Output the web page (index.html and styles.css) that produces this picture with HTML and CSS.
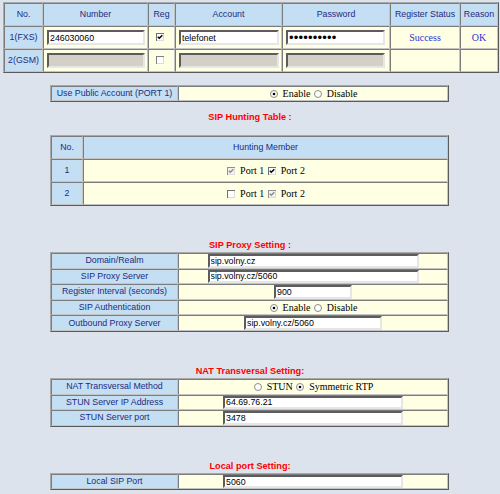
FILE: index.html
```html
<!DOCTYPE html>
<html>
<head>
<meta charset="utf-8">
<title>SIP Settings</title>
<link rel="stylesheet" href="styles.css">
</head>
<body>
<div class="page">

<table class="grid ports">
  <colgroup><col class="p1"><col class="p2"><col class="p3"><col class="p4"><col class="p5"><col class="p6"><col class="p7"></colgroup>
  <tr>
    <th>No.</th><th>Number</th><th>Reg</th><th>Account</th><th>Password</th><th>Register Status</th><th>Reason</th>
  </tr>
  <tr>
    <th>1(FXS)</th>
    <td class="fld"><input class="in w-num" type="text" value="246030060"></td>
    <td><svg class="cb" width="8" height="8" viewBox="0 0 8 8"><rect width="8" height="8" fill="#dcdcdc"/><path d="M0 0H8V1H1V8H0Z" fill="#707070"/><rect x="1" y="1" width="6" height="6" fill="#fff"/><path d="M1.8 3.7L3.3 5.2L6.3 2.2" fill="none" stroke="#000" stroke-width="1.5"/></svg></td>
    <td class="fld"><input class="in w-acc" type="text" value="telefonet"></td>
    <td class="fld"><input class="in w-pw pw" type="password" value="1234567890"></td>
    <td class="st">Success</td>
    <td class="st">OK</td>
  </tr>
  <tr>
    <th>2(GSM)</th>
    <td class="fld"><input class="in w-num" type="text" disabled></td>
    <td><svg class="cb" width="8" height="8" viewBox="0 0 8 8"><rect width="8" height="8" fill="#dcdcdc"/><path d="M0 0H8V1H1V8H0Z" fill="#808080"/><rect x="1" y="1" width="6" height="6" fill="#fff"/></svg></td>
    <td class="fld"><input class="in w-acc" type="text" disabled></td>
    <td class="fld"><input class="in w-pw" type="password" disabled></td>
    <td></td>
    <td></td>
  </tr>
</table>

<table class="grid form public">
  <colgroup><col class="lc"><col class="vc"></colgroup>
  <tr>
    <th>Use Public Account (PORT 1)</th>
    <td class="opts"><svg class="rd" width="8" height="8" viewBox="0 0 8 8"><circle cx="4" cy="4" r="3.5" fill="#fff" stroke="#8a8a8a"/><circle cx="4" cy="4" r="1.3" fill="#000"/></svg><span class="sv">Enable</span> <svg class="rd" width="8" height="8" viewBox="0 0 8 8"><circle cx="4" cy="4" r="3.5" fill="#fff" stroke="#8a8a8a"/></svg><span class="sv">Disable</span></td>
  </tr>
</table>

<div class="title first">SIP Hunting Table :</div>
<table class="grid hunt">
  <colgroup><col class="hc1"><col class="hc2"></colgroup>
  <tr><th>No.</th><th>Hunting Member</th></tr>
  <tr>
    <th>1</th>
    <td class="opts"><svg class="cb" width="8" height="8" viewBox="0 0 8 8"><rect width="8" height="8" fill="#dcdcdc"/><path d="M0 0H8V1H1V8H0Z" fill="#909090"/><rect x="1" y="1" width="6" height="6" fill="#f2f2f2"/><path d="M1.8 3.7L3.3 5.2L6.3 2.2" fill="none" stroke="#8c8c8c" stroke-width="1.5"/></svg><span class="sv">Port 1</span> <svg class="cb" width="8" height="8" viewBox="0 0 8 8"><rect width="8" height="8" fill="#dcdcdc"/><path d="M0 0H8V1H1V8H0Z" fill="#707070"/><rect x="1" y="1" width="6" height="6" fill="#fff"/><path d="M1.8 3.7L3.3 5.2L6.3 2.2" fill="none" stroke="#000" stroke-width="1.5"/></svg><span class="sv">Port 2</span></td>
  </tr>
  <tr>
    <th>2</th>
    <td class="opts"><svg class="cb" width="8" height="8" viewBox="0 0 8 8"><rect width="8" height="8" fill="#dcdcdc"/><path d="M0 0H8V1H1V8H0Z" fill="#707070"/><rect x="1" y="1" width="6" height="6" fill="#fff"/></svg><span class="sv">Port 1</span> <svg class="cb" width="8" height="8" viewBox="0 0 8 8"><rect width="8" height="8" fill="#dcdcdc"/><path d="M0 0H8V1H1V8H0Z" fill="#909090"/><rect x="1" y="1" width="6" height="6" fill="#f2f2f2"/><path d="M1.8 3.7L3.3 5.2L6.3 2.2" fill="none" stroke="#8c8c8c" stroke-width="1.5"/></svg><span class="sv">Port 2</span></td>
  </tr>
</table>

<div class="title">SIP Proxy Setting :</div>
<table class="grid form proxy">
  <colgroup><col class="lc"><col class="vc"></colgroup>
  <tr><th>Domain/Realm</th><td><input class="in w-211" type="text" value="sip.volny.cz"></td></tr>
  <tr><th>SIP Proxy Server</th><td><input class="in w-211" type="text" value="sip.volny.cz/5060"></td></tr>
  <tr><th>Register Interval (seconds)</th><td><input class="in w-78" type="text" value="900"></td></tr>
  <tr><th>SIP Authentication</th><td class="opts"><svg class="rd" width="8" height="8" viewBox="0 0 8 8"><circle cx="4" cy="4" r="3.5" fill="#fff" stroke="#8a8a8a"/><circle cx="4" cy="4" r="1.3" fill="#000"/></svg><span class="sv">Enable</span> <svg class="rd" width="8" height="8" viewBox="0 0 8 8"><circle cx="4" cy="4" r="3.5" fill="#fff" stroke="#8a8a8a"/></svg><span class="sv">Disable</span></td></tr>
  <tr><th>Outbound Proxy Server</th><td><input class="in w-138" type="text" value="sip.volny.cz/5060"></td></tr>
</table>

<div class="title">NAT Transversal Setting:</div>
<table class="grid form nat">
  <colgroup><col class="lc"><col class="vc"></colgroup>
  <tr><th>NAT Transversal Method</th><td class="opts"><svg class="rd" width="8" height="8" viewBox="0 0 8 8"><circle cx="4" cy="4" r="3.5" fill="#fff" stroke="#8a8a8a"/></svg><span class="sv">STUN</span> <svg class="rd" width="8" height="8" viewBox="0 0 8 8"><circle cx="4" cy="4" r="3.5" fill="#fff" stroke="#8a8a8a"/><circle cx="4" cy="4" r="1.3" fill="#000"/></svg><span class="sv">Symmetric RTP</span></td></tr>
  <tr><th>STUN Server IP Address</th><td><input class="in w-180" type="text" value="64.69.76.21"></td></tr>
  <tr><th>STUN Server port</th><td><input class="in w-180" type="text" value="3478"></td></tr>
</table>

<div class="title">Local port Setting:</div>
<table class="grid form local">
  <colgroup><col class="lc"><col class="vc"></colgroup>
  <tr><th>Local SIP Port</th><td><input class="in w-180" type="text" value="5060"></td></tr>
</table>

</div>
</body>
</html>
```

FILE: styles.css
```css
html, body {
  margin: 0;
  padding: 0;
}
body {
  background: #dce3ec;
  font-family: "Liberation Sans", Arial, sans-serif;
  font-size: 8.8px;
  color: #1d2b7d;
  width: 500px;
  height: 494px;
  overflow: hidden;
}
.page {
  padding-top: 2px;
}

/* tables */
.grid {
  border-collapse: separate;
  border-spacing: 0;
  table-layout: fixed;
  border: 1px solid;
  border-color: #a8a8a8 #5a5a5a #5a5a5a #a8a8a8;
}
.grid th,
.grid td {
  border: 1px solid;
  border-color: #7c7c7c #c4c4c4 #c4c4c4 #7c7c7c;
  padding: 0;
  text-align: center;
  vertical-align: middle;
  line-height: 11px;
  font-weight: normal;
  overflow: hidden;
}
.grid th {
  background: #c4def3;
}
.grid td {
  background: #ffffe4;
}

/* ports table */
.ports {
  width: 496px;
  margin-left: 3px;
}
.ports tr { height: 23px; }
.p1 { width: 39px; }
.p2 { width: 105px; }
.p3 { width: 27px; }
.p4 { width: 107px; }
.p5 { width: 108px; }
.p6 { width: 70px; }
.p7 { width: 38px; }
.ports .fld {
  text-align: left;
  padding-left: 3px;
}
.ports .in { height: 15px; }
.st {
  font-family: "Liberation Serif", "Times New Roman", serif;
  font-size: 10px;
  color: #3030d0;
}

/* form tables */
.form {
  width: 399px;
  margin-left: 50px;
}
.lc { width: 127px; }
.vc { width: 270px; }
.form tr { height: 15.6px; }
.public { margin-top: 12px; }
.public tr { height: 15px; }

.hunt {
  width: 399px;
  margin-left: 50px;
}
.hunt tr { height: 23px; }
.hc1 { width: 32px; }
.hc2 { width: 365px; }

/* titles */
.title {
  width: 500px;
  text-align: center;
  color: #ff0000;
  font-weight: bold;
  font-size: 9.2px;
  line-height: 11px;
  margin-top: 34px;
  margin-bottom: 1px;
}
.title.first {
  margin-top: 10px;
  margin-bottom: 12px;
}

/* inputs */
.in {
  box-sizing: border-box;
  display: block;
  height: 13.6px;
  margin: 0 auto;
  padding: 0 0 0 1px;
  border: 2px solid;
  border-color: #5c5c5c #e6e6e6 #e6e6e6 #5c5c5c;
  background: #fff;
  font-family: "Liberation Sans", Arial, sans-serif;
  font-size: 8.8px;
  color: #000;
  outline: none;
}
.ports .in { margin: 0; }
.in:disabled {
  background: #d4d0c8;
}
.pw {
  font-size: 13px;
  letter-spacing: 0.2px;
}
.w-num { width: 98px; }
.w-acc { width: 100px; }
.w-pw { width: 99px; }
.w-211 { width: 211px; }
.w-78 { width: 78px; }
.w-138 { width: 138px; }
.w-180 { width: 180px; }

/* options */
.opts {
  white-space: nowrap;
}
.sv {
  font-family: "Liberation Serif", "Times New Roman", serif;
  font-size: 10px;
  color: #000;
}
.cb, .rd {
  display: inline-block;
  vertical-align: -1px;
  margin: 0 5px 0 1px;
}
```
